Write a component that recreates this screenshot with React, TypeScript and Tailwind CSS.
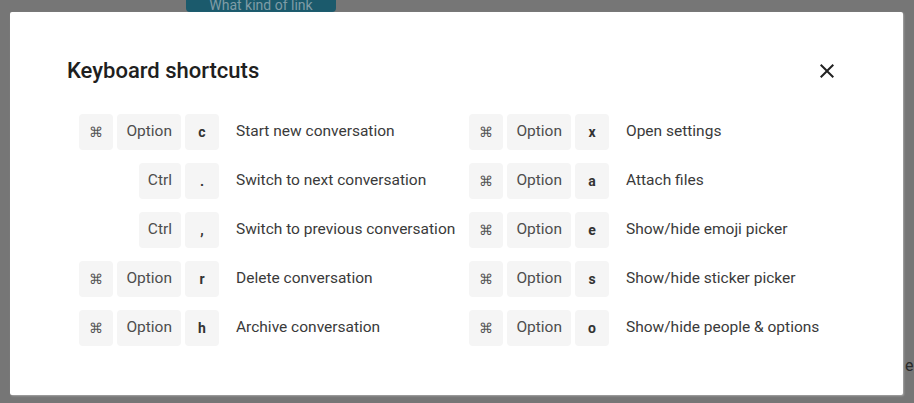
import React from "react";

type Shortcut = { keys: string[]; label: string };

const left: Shortcut[] = [
  { keys: ["⌘", "Option", "c"], label: "Start new conversation" },
  { keys: ["Ctrl", "."], label: "Switch to next conversation" },
  { keys: ["Ctrl", ","], label: "Switch to previous conversation" },
  { keys: ["⌘", "Option", "r"], label: "Delete conversation" },
  { keys: ["⌘", "Option", "h"], label: "Archive conversation" },
];

const right: Shortcut[] = [
  { keys: ["⌘", "Option", "x"], label: "Open settings" },
  { keys: ["⌘", "Option", "a"], label: "Attach files" },
  { keys: ["⌘", "Option", "e"], label: "Show/hide emoji picker" },
  { keys: ["⌘", "Option", "s"], label: "Show/hide sticker picker" },
  { keys: ["⌘", "Option", "o"], label: "Show/hide people & options" },
];

function Key({ k }: { k: string }) {
  const single = k.length === 1 && k !== "⌘";
  return (
    <span
      className={
        "flex h-9 min-w-[34px] items-center justify-center rounded bg-[#f5f5f5] px-[9px] " +
        (single
          ? "text-[14px] font-bold text-[#333]"
          : k === "⌘"
            ? "text-[14px] text-[#555]"
            : "text-[15.5px] text-[#4d4d4d]")
      }
    >
      {k}
    </span>
  );
}

function Row({ s }: { s: Shortcut }) {
  return (
    <div className="flex h-9 items-center">
      <div className="flex w-[140px] justify-end gap-1">
        {s.keys.map((k) => (
          <Key key={k} k={k} />
        ))}
      </div>
      <span className="ml-[17px] whitespace-nowrap text-[15.5px] text-[#3a3a3a]">
        {s.label}
      </span>
    </div>
  );
}

export default function App() {
  return (
    <div
      className="relative h-[403px] w-[914px] overflow-hidden bg-[#767676] pl-[10px] pt-[12px]"
      style={{ fontFamily: "Roboto, 'Noto Sans', sans-serif" }}
    >
      {/* page behind the overlay */}
      <div className="absolute left-[186px] top-[-16px] flex h-[28px] w-[150px] items-end justify-center rounded bg-[#1b5a6c] text-[14px] leading-[14px] text-[#7f9ca6]">
        What kind of link
      </div>
      <span className="absolute left-[905px] top-[354px] text-[16px] text-[#2a2a2a]">e</span>

      <div className="relative h-[383px] w-[893px] rounded-[2px] bg-white shadow-[1px_1px_2px_rgba(255,255,255,0.35)]">
        <div className="flex items-center justify-between pl-[57px] pr-[64px] pt-[47px]">
          <h2 className="text-[22px] font-medium leading-6 text-[#202020]">
            Keyboard shortcuts
          </h2>
          <button className="flex h-6 w-6 items-center justify-center text-[#222]">
            <svg viewBox="0 0 24 24" width="24" height="24" fill="currentColor">
              <path d="M19 6.41 17.59 5 12 10.59 6.41 5 5 6.41 10.59 12 5 17.59 6.41 19 12 13.41 17.59 19 19 17.59 13.41 12z" />
            </svg>
          </button>
        </div>

        <div className="ml-[69px] mt-[31px] grid w-[780px] grid-cols-2">
          <div className="flex flex-col gap-[13px]">
            {left.map((s) => (
              <Row key={s.label} s={s} />
            ))}
          </div>
          <div className="flex flex-col gap-[13px]">
            {right.map((s) => (
              <Row key={s.label} s={s} />
            ))}
          </div>
        </div>
      </div>
    </div>
  );
}
